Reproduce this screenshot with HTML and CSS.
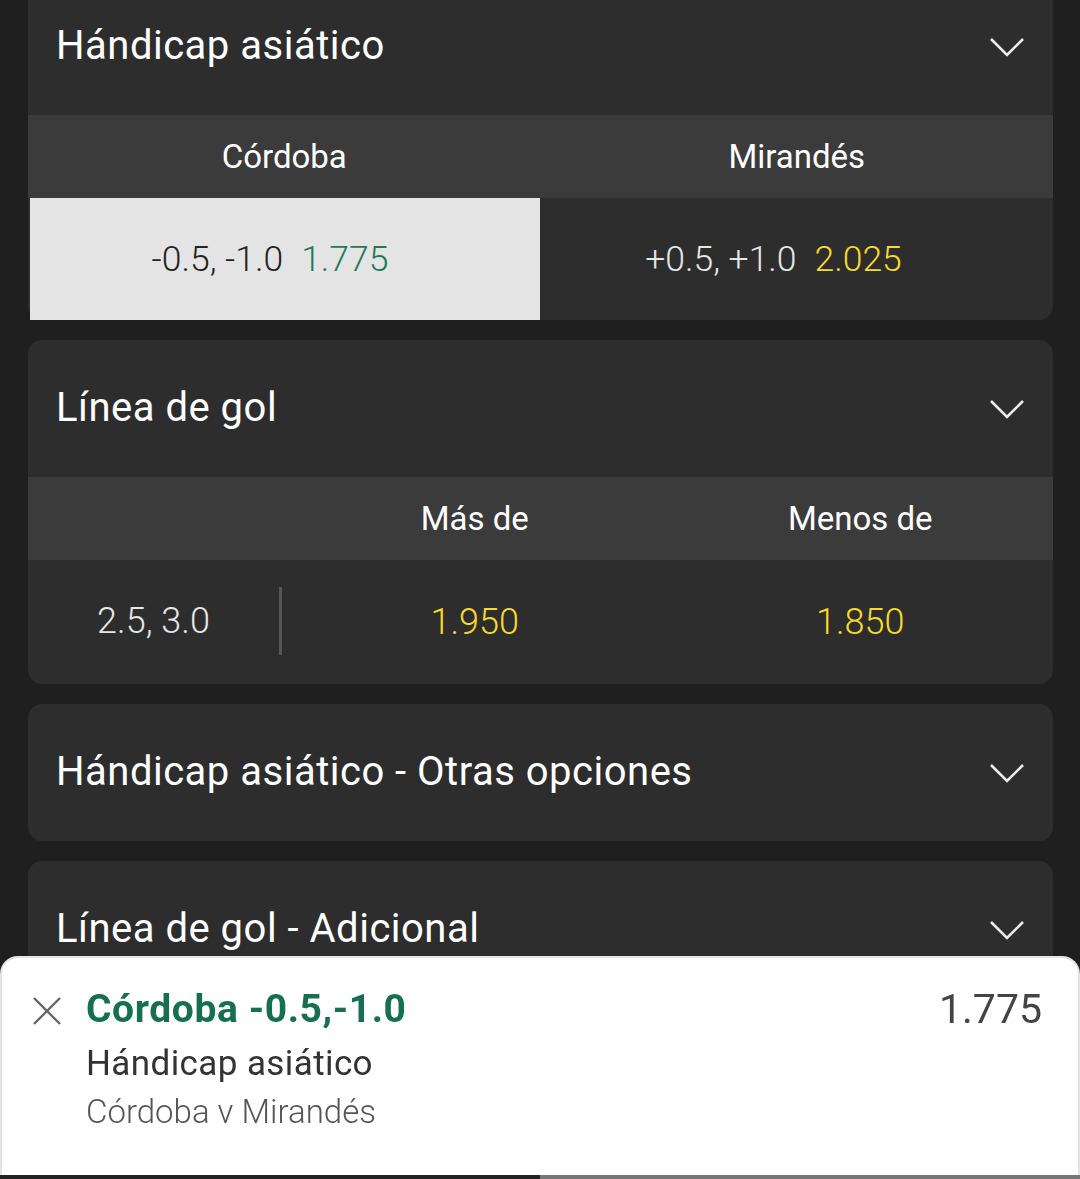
FILE: index.html
```html
<!DOCTYPE html>
<html lang="es">
<head>
    <meta charset="UTF-8">
    <meta name="viewport" content="width=device-width, initial-scale=1.0">
    <title>Mercados</title>
    <link rel="stylesheet" href="styles.css">
</head>
<body>

<div class="markets">
    <div class="market first">
        <div class="market-head">
            <span class="market-title">Hándicap asiático</span>
            <svg class="chevron" viewBox="0 0 36 20"><polyline points="2,2 18,18 34,2"/></svg>
        </div>
        <div class="col-row two">
            <div>Córdoba</div>
            <div>Mirandés</div>
        </div>
        <div class="odds-row two">
            <div class="odds-cell selected">
                <span class="line">-0.5, -1.0</span>
                <span class="price">1.775</span>
            </div>
            <div class="odds-cell away">
                <span class="line">+0.5, +1.0</span>
                <span class="price">2.025</span>
            </div>
        </div>
    </div>

    <div class="market">
        <div class="market-head">
            <span class="market-title">Línea de gol</span>
            <svg class="chevron" viewBox="0 0 36 20"><polyline points="2,2 18,18 34,2"/></svg>
        </div>
        <div class="col-row three">
            <div></div>
            <div>Más de</div>
            <div>Menos de</div>
        </div>
        <div class="odds-row three">
            <div class="goal-line">2.5, 3.0</div>
            <div class="odds-cell plain"><span class="price">1.950</span></div>
            <div class="odds-cell plain"><span class="price">1.850</span></div>
        </div>
    </div>

    <div class="market">
        <div class="market-head">
            <span class="market-title">Hándicap asiático - Otras opciones</span>
            <svg class="chevron" viewBox="0 0 36 20"><polyline points="2,2 18,18 34,2"/></svg>
        </div>
    </div>

    <div class="market">
        <div class="market-head">
            <span class="market-title">Línea de gol - Adicional</span>
            <svg class="chevron" viewBox="0 0 36 20"><polyline points="2,2 18,18 34,2"/></svg>
        </div>
    </div>
</div>

<div class="betslip">
    <div class="slip-body">
        <svg class="remove" viewBox="0 0 30 30"><line x1="2" y1="2" x2="28" y2="28"/><line x1="28" y1="2" x2="2" y2="28"/></svg>
        <div class="slip-info">
            <div class="slip-pick">Córdoba -0.5,-1.0</div>
            <div class="slip-market">Hándicap asiático</div>
            <div class="slip-event">Córdoba v Mirandés</div>
        </div>
        <div class="slip-price">1.775</div>
    </div>
    <div class="slip-bar">
        <div class="bar-left"></div>
        <div class="bar-right"></div>
    </div>
</div>

</body>
</html>
```

FILE: styles.css
```css
body {
    margin: 0;
    background-color: #1f1f1f;
    font-family: Roboto, "Noto Sans", sans-serif;
    color: #fff;
    overflow: hidden;
    height: 1179px;
}
.markets {
    display: flex;
    flex-direction: column;
    gap: 20px;
    padding: 0 27px 0 28px;
}
.market {
    background-color: #2d2d2d;
    border-radius: 14px;
}
.market.first {
    margin-top: -22px;
}
.market-head {
    height: 137px;
    display: flex;
    align-items: center;
    justify-content: space-between;
    padding: 0 28px;
}
.market-title {
    font-size: 40px;
    letter-spacing: 0.5px;
    margin-top: -2px;
}
.chevron {
    width: 36px;
    height: 20px;
    fill: none;
    stroke: #ececec;
    stroke-width: 2.6;
}
.col-row {
    display: grid;
    height: 83px;
    align-items: center;
    background-color: #3b3b3b;
    font-size: 33px;
    text-align: center;
}
.two {
    grid-template-columns: 1fr 1fr;
}
.three {
    grid-template-columns: 254px 1fr 1fr;
}
.odds-row {
    display: grid;
    height: 122px;
}
.odds-row.two {
    padding-left: 2px;
    grid-template-columns: 510px 1fr;
}
.odds-row.three {
    height: 124px;
}
.odds-cell {
    display: flex;
    justify-content: center;
    align-items: center;
    gap: 18px;
    padding-right: 30px;
    font-size: 35.5px;
    font-weight: 300;
}
.odds-cell.away {
    padding-right: 46px;
}
.odds-cell.plain {
    padding-right: 0;
    font-size: 36px;
}
.line {
    color: #e6e6e6;
}
.price {
    color: #f5da2a;
}
.selected {
    background-color: #e4e4e4;
}
.selected .line {
    color: #232323;
}
.selected .price {
    color: #1f7a5a;
}
.goal-line {
    display: flex;
    align-items: center;
    justify-content: center;
    font-size: 36px;
    font-weight: 300;
    color: #e6e6e6;
    border-right: 3px solid #555;
    margin: 27px 0 29px;
}

.betslip {
    position: fixed;
    left: 0;
    right: 0;
    bottom: 0;
    height: 223px;
    display: flex;
    flex-direction: column;
    background-color: #fff;
    border: 2px solid #e4e4e4;
    border-bottom: none;
    border-radius: 18px 18px 0 0;
    box-sizing: border-box;
}
.slip-body {
    flex: 1;
    display: flex;
    align-items: flex-start;
    padding: 28px 36px 0 30px;
}
.remove {
    width: 30px;
    height: 30px;
    margin-top: 10px;
    stroke: #666;
    stroke-width: 2.4;
}
.slip-info {
    flex: 1;
    padding-left: 24px;
}
.slip-pick {
    font-size: 39px;
    font-weight: 700;
    letter-spacing: 0.6px;
    line-height: 46px;
    color: #16704f;
}
.slip-market {
    font-size: 35px;
    letter-spacing: 0.4px;
    line-height: 64px;
    color: #333;
}
.slip-event {
    font-size: 33px;
    font-weight: 300;
    line-height: 32px;
    color: #555;
}
.slip-price {
    font-size: 41px;
    line-height: 46px;
    color: #444;
}
.slip-bar {
    display: flex;
    height: 4px;
    margin: 0 -2px;
}
.bar-left {
    flex: 1;
    background-color: #222;
}
.bar-right {
    flex: 1;
    background-color: #777;
}
```
